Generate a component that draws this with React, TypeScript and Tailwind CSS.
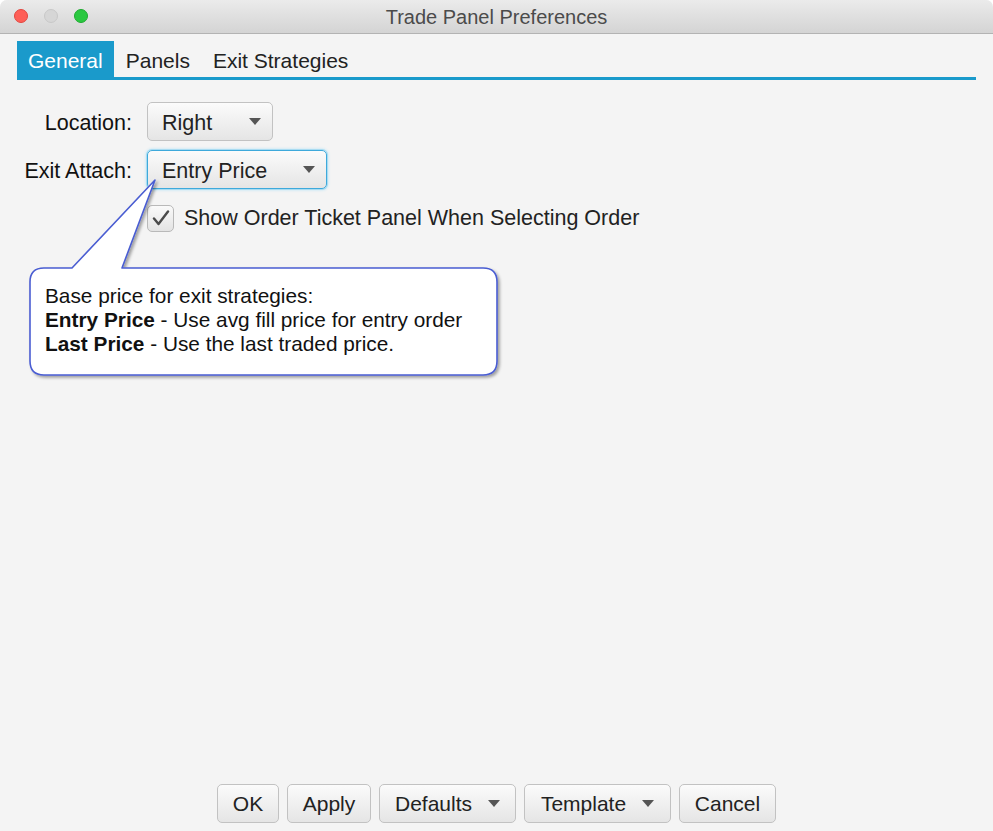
import React from 'react'

const font = "[font-family:'Liberation_Sans',Arial,sans-serif]"

function Caret() {
  return (
    <svg width="12" height="7" viewBox="0 0 12 7" className="shrink-0">
      <path d="M0 0 L12 0 L6 7 Z" fill="#555" />
    </svg>
  )
}

function Combo({ label, width, focused }: { label: string; width: string; focused?: boolean }) {
  return (
    <div
      className={`flex h-[39px] items-center justify-between rounded-[5px] border bg-gradient-to-b from-[#fbfbfb] to-[#e5e5e5] pl-[14px] pr-[11px] text-[21.5px] text-[#222] ${width} ${
        focused
          ? 'border-[#3ea9db] shadow-[0_0_0_1px_#a9dcf2,0_0_3px_1px_#b6e2f5]'
          : 'border-[#c2c2c2]'
      }`}
    >
      <span className="pt-[3px]">{label}</span>
      <Caret />
    </div>
  )
}

function Button({ label, menu, width }: { label: string; menu?: boolean; width: string }) {
  return (
    <div
      className={`flex h-[39px] items-center justify-center gap-[16px] rounded-[5px] border border-[#c2c2c2] bg-gradient-to-b from-[#fbfbfb] to-[#e5e5e5] text-[21px] text-[#222] ${width}`}
    >
      <span>{label}</span>
      {menu && <Caret />}
    </div>
  )
}

function Callout() {
  return (
    <div className="pointer-events-none absolute left-[28px] top-[178px] h-[205px] w-[478px]">
      <svg width="478" height="205" viewBox="0 0 478 205" className="absolute left-0 top-0">
        <defs>
          <filter id="sh" x="-5%" y="-5%" width="115%" height="120%">
            <feDropShadow dx="2" dy="2" stdDeviation="1.5" floodColor="#000" floodOpacity="0.35" />
          </filter>
        </defs>
        <path
          d="M127 2 L94 90 L455 90 Q469 90 469 104 L469 183 Q469 197 455 197 L16 197 Q2 197 2 183 L2 104 Q2 90 16 90 L44 90 Z"
          fill="#fff"
          stroke="#4a5dd2"
          strokeWidth="1.6"
          strokeLinejoin="round"
          filter="url(#sh)"
        />
      </svg>
      <div className="absolute left-[17px] top-[106px] text-[20.8px] leading-[24px] text-[#111]">
        <div>Base price for exit strategies:</div>
        <div>
          <b>Entry Price</b> - Use avg fill price for entry order
        </div>
        <div>
          <b>Last Price</b> - Use the last traded price.
        </div>
      </div>
    </div>
  )
}

export default function App() {
  return (
    <div className={`h-[831px] w-[993px] bg-white ${font}`}>
      <div className="relative flex h-full flex-col overflow-hidden rounded-t-[7px] bg-[#f4f4f4]">
        {/* title bar */}
        <div className="relative flex h-[34px] shrink-0 items-center justify-center border-b border-[#b3b3b3] bg-gradient-to-b from-[#ebebeb] to-[#d4d4d4]">
          <div className="absolute left-[14px] top-[9px] flex gap-[16px]">
            <span className="h-[14px] w-[14px] rounded-full border border-[#e2463f] bg-[#fe5f57]" />
            <span className="h-[14px] w-[14px] rounded-full border border-[#c8c8c8] bg-[#d6d6d6]" />
            <span className="h-[14px] w-[14px] rounded-full border border-[#1eaa2f] bg-[#2ac840]" />
          </div>
          <span className="text-[20px] text-[#4b4b4b]">Trade Panel Preferences</span>
        </div>

        {/* tabs */}
        <div className="mx-[17px] mt-[7px] flex border-b-[3px] border-[#1a9acb] text-[21px] text-[#222]">
          <div className="flex h-[36px] items-center bg-[#1a9acb] px-[11px] pt-[3px] text-white">General</div>
          <div className="flex h-[36px] items-center pl-[12px] pr-[11px] pt-[3px]">Panels</div>
          <div className="flex h-[36px] items-center pl-[12px] pr-[11px] pt-[3px]">Exit Strategies</div>
        </div>

        {/* form */}
        <div className="mt-[22px] flex flex-col pl-[17px] text-[21.5px] text-[#111]">
          <div className="flex items-center gap-[15px]">
            <span className="w-[115px] pt-[3px] text-right">Location:</span>
            <Combo label="Right" width="w-[126px]" />
          </div>
          <div className="mt-[9px] flex items-center gap-[15px]">
            <span className="w-[115px] pt-[3px] text-right">Exit Attach:</span>
            <Combo label="Entry Price" width="w-[180px]" focused />
          </div>
          <div className="mt-[13px] flex items-center gap-[10px] pl-[130px]">
            <div className="flex h-[27px] w-[27px] items-center justify-center rounded-[5px] border border-[#b9b9b9] bg-gradient-to-b from-[#fafafa] to-[#e3e3e3]">
              <svg width="18" height="16" viewBox="0 0 18 16">
                <path d="M2 8.5 L6.5 14 L16 1.5" fill="none" stroke="#4a4a4a" strokeWidth="2.4" strokeLinecap="round" strokeLinejoin="round" />
              </svg>
            </div>
            <span className="text-[#222]">Show Order Ticket Panel When Selecting Order</span>
          </div>
        </div>

        <div className="flex-1" />

        {/* buttons */}
        <div className="mb-[8px] flex justify-center gap-[8px]">
          <Button label="OK" width="w-[62px]" />
          <Button label="Apply" width="w-[84px]" />
          <Button label="Defaults" menu width="w-[137px]" />
          <Button label="Template" menu width="w-[147px]" />
          <Button label="Cancel" width="w-[97px]" />
        </div>

        <Callout />
      </div>
    </div>
  )
}
